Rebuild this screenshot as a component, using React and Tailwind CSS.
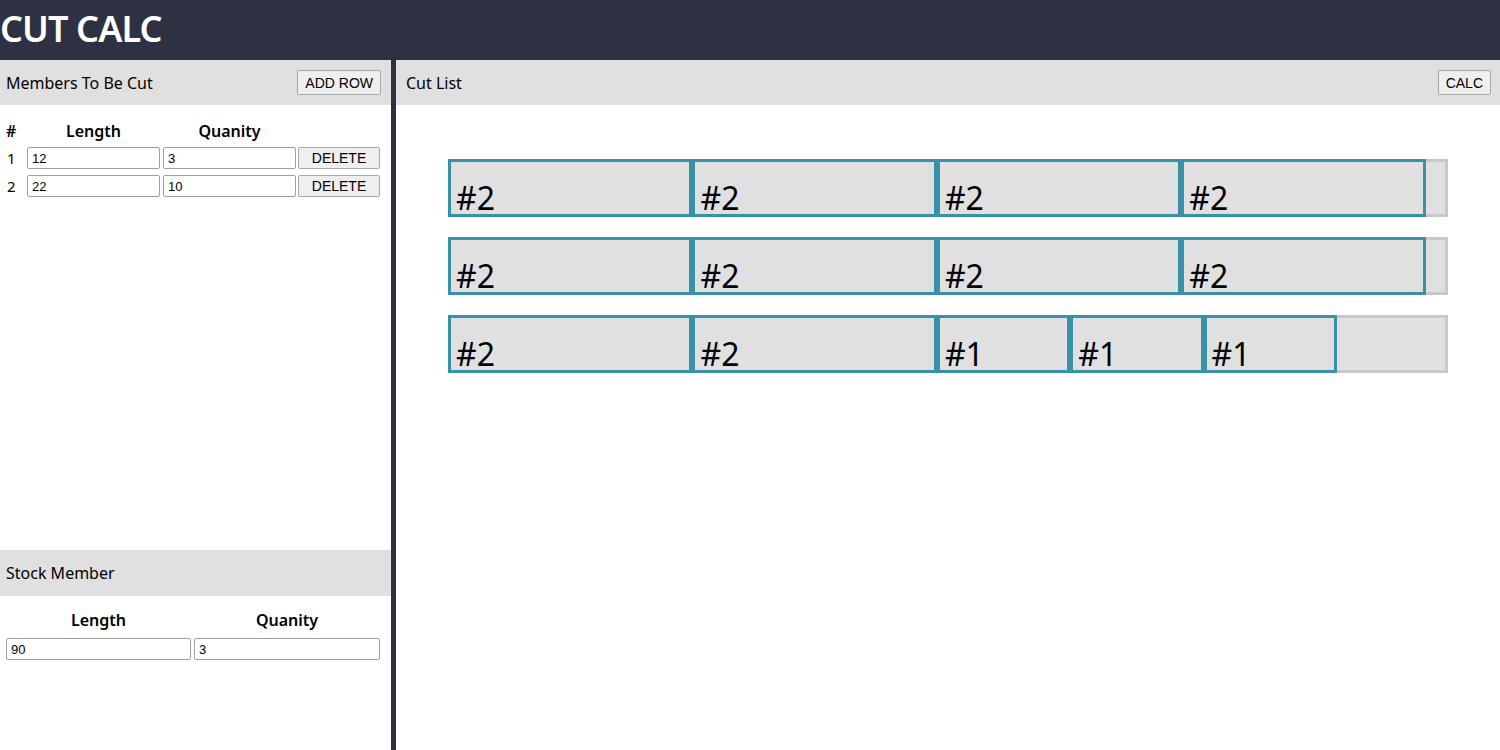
import React from "react";

const FONT = { fontFamily: '"Noto Sans", "Open Sans", sans-serif' };
const ARIAL = { fontFamily: '"Liberation Sans", Arial, sans-serif' };

const STOCK = 90;
const rows = [
  [2, 2, 2, 2],
  [2, 2, 2, 2],
  [2, 2, 1, 1, 1],
];
const lengths = { 1: 12, 2: 22 };

function Btn({ children }) {
  return (
    <button
      style={ARIAL}
      className="h-[25px] px-[7px] text-[14px] text-black bg-[#efefef] border border-[#a8a8a8] rounded-[2px] leading-none"
    >
      {children}
    </button>
  );
}

function Input({ value, w }) {
  return (
    <input
      readOnly
      value={value}
      style={ARIAL}
      className={`${w} block h-[22px] px-[4px] text-[13px] text-black bg-white border border-[#a0a0a0] rounded-[2px] outline-none`}
    />
  );
}

export default function App() {
  return (
    <div style={FONT} className="w-[1500px] h-[750px] bg-white text-black overflow-hidden flex flex-col">
      <div className="h-[60px] bg-[#2d3142] flex items-center shrink-0">
        <h1 className="text-white text-[36px] font-semibold leading-none tracking-[-0.9px] pb-[2px]">CUT CALC</h1>
      </div>
      <div className="flex flex-1">
        <div className="w-[396px] border-r-[5px] border-[#2d3142] flex flex-col shrink-0">
          <div className="h-[490px] flex flex-col">
            <div className="h-[45px] bg-[#e0e0e0] flex items-center justify-between pl-[6px] pr-[10px]">
              <span className="text-[16px]">Members To Be Cut</span>
              <Btn>ADD ROW</Btn>
            </div>
            <div className="pt-[14px] pl-[4px]">
              <div className="flex h-[24px] items-center text-[16px] font-semibold">
                <div className="w-[21px] pl-[2px]">#</div>
                <div className="ml-[2px] w-[133px] text-center">Length</div>
                <div className="ml-[3px] w-[133px] text-center">Quanity</div>
              </div>
              {[
                ["1", "12", "3"],
                ["2", "22", "10"],
              ].map(([n, l, q], i) => (
                <div key={n} className={`flex h-[22px] items-center ${i === 0 ? "mt-[4px]" : "mt-[6px]"}`}>
                  <div className="w-[21px] pl-[3px] text-[15px]">{n}</div>
                  <div className="ml-[2px]"><Input value={l} w="w-[133px]" /></div>
                  <div className="ml-[3px]"><Input value={q} w="w-[133px]" /></div>
                  <button
                    style={ARIAL}
                    className="ml-[2px] w-[82px] h-[22px] text-[14px] bg-[#efefef] border border-[#a8a8a8] rounded-[2px] leading-none"
                  >
                    DELETE
                  </button>
                </div>
              ))}
            </div>
          </div>
          <div className="h-[46px] bg-[#e0e0e0] flex items-center pl-[6px]">
            <span className="text-[16px]">Stock Member</span>
          </div>
          <div className="pt-[12px] pl-[6px]">
            <div className="flex h-[24px] items-center text-[16px] font-semibold">
              <div className="w-[185px] text-center">Length</div>
              <div className="ml-[3px] w-[186px] text-center">Quanity</div>
            </div>
            <div className="flex mt-[6px]">
              <Input value="90" w="w-[185px]" />
              <div className="ml-[3px]"><Input value="3" w="w-[186px]" /></div>
            </div>
          </div>
        </div>
        <div className="flex-1 flex flex-col">
          <div className="h-[45px] bg-[#e0e0e0] flex items-center justify-between pl-[10px] pr-[9px]">
            <span className="text-[16px]">Cut List</span>
            <Btn>CALC</Btn>
          </div>
          <div className="mt-[54px] flex flex-col items-center gap-[20px]">
            {rows.map((r, ri) => (
              <div key={ri} className="w-[1000px] h-[58px] flex">
                {r.map((p, pi) => (
                  <div
                    key={pi}
                    style={{ width: `${(lengths[p] / STOCK) * 1000}px` }}
                    className="h-full shrink-0 border-[3px] border-[#3891a6] bg-[#e0e0e0] flex items-end pl-[5px]"
                  >
                    <span className="text-[32px] leading-none">#{p}</span>
                  </div>
                ))}
                <div className="flex-1 h-full border-[3px] border-l-0 border-[#c8c8c8] bg-[#e0e0e0]" />
              </div>
            ))}
          </div>
        </div>
      </div>
    </div>
  );
}
